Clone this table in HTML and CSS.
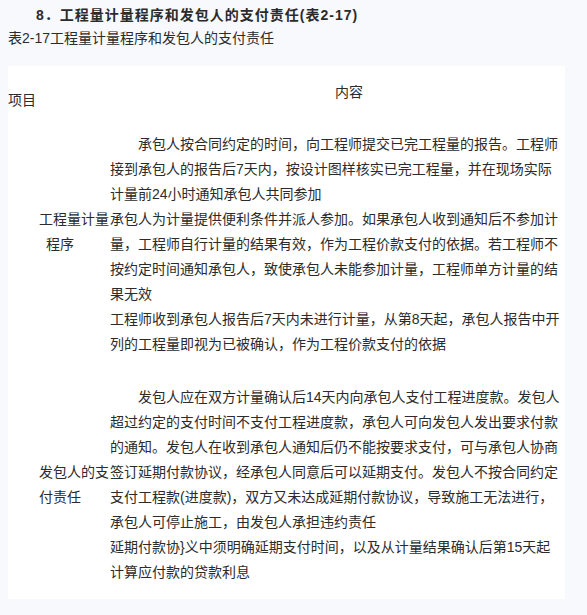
FILE: index.html
```html
<!DOCTYPE html>
<html lang="zh-CN">
<head>
<meta charset="utf-8">
<title>工程量计量程序和发包人的支付责任</title>
<link rel="stylesheet" href="styles.css">
</head>
<body>
<div class="page">
  <p class="title">8．工程量计量程序和发包人的支付责任(表2-17)</p>
  <p class="caption">表2-17工程量计量程序和发包人的支付责任</p>
  <div class="table">
    <div class="head-label">项目</div>
    <div class="head-content">内容</div>

    <div class="label label-1">工程量计量<span class="shift">程序</span></div>
    <div class="content content-1">
      <p class="first">承包人按合同约定的时间，向工程师提交已完工程量的报告。工程师接到承包人的报告后7天内，按设计图样核实已完工程量，并在现场实际计量前24小时通知承包人共同参加</p>
      <p>承包人为计量提供便利条件并派人参加。如果承包人收到通知后不参加计量，工程师自行计量的结果有效，作为工程价款支付的依据。若工程师不按约定时间通知承包人，致使承包人未能参加计量，工程师单方计量的结果无效</p>
      <p>工程师收到承包人报告后7天内未进行计量，从第8天起，承包人报告中开列的工程量即视为已被确认，作为工程价款支付的依据</p>
    </div>

    <div class="label label-2">发包人的支付责任</div>
    <div class="content content-2">
      <p class="first">发包人应在双方计量确认后14天内向承包人支付工程进度款。发包人超过约定的支付时间不支付工程进度款，承包人可向发包人发出要求付款的通知。发包人在收到承包人通知后仍不能按要求支付，可与承包人协商签订延期付款协议，经承包人同意后可以延期支付。发包人不按合同约定支付工程款(进度款)，双方又未达成延期付款协议，导致施工无法进行，承包人可停止施工，由发包人承担违约责任</p>
      <p>延期付款协}义中须明确延期支付时间，以及从计量结果确认后第15天起<br>计算应付款的贷款利息</p>
    </div>
  </div>
</div>
</body>
</html>
```

FILE: styles.css
```css
html, body {
  margin: 0;
  padding: 0;
}

body {
  background: #f7f9fd;
  color: #2b2b2b;
  font-family: "Liberation Sans", "Noto Sans CJK SC", sans-serif;
  font-size: 14px;
}

.page {
  padding: 4px 8px 0 8px;
}

.title {
  margin: 0;
  line-height: 22px;
  text-indent: 28px;
  font-weight: bold;
  letter-spacing: 1px;
}

.caption {
  margin: 1px 0 0 0;
  line-height: 22px;
}

.table {
  margin-top: 17px;
  width: 557px;
  background: #ffffff;
  display: grid;
  grid-template-columns: 102px 452px;
  padding-right: 3px;
  box-sizing: border-box;
  line-height: 25px;
}

.head-label {
  padding-top: 21.5px;
}

.head-content {
  padding: 13.5px 0 13.5px 225px;
}

.label {
  padding-left: 31px;
}

.label-1 {
  padding-top: 88.5px;
}

.label-2 {
  padding-top: 103px;
}

.shift {
  margin-left: 7px;
}

.content p {
  margin: 0;
}

.content .first {
  text-indent: 28px;
}

.content-1 {
  padding-top: 13.5px;
}

.content-2 {
  padding-top: 28px;
  padding-bottom: 14.5px;
}
```
